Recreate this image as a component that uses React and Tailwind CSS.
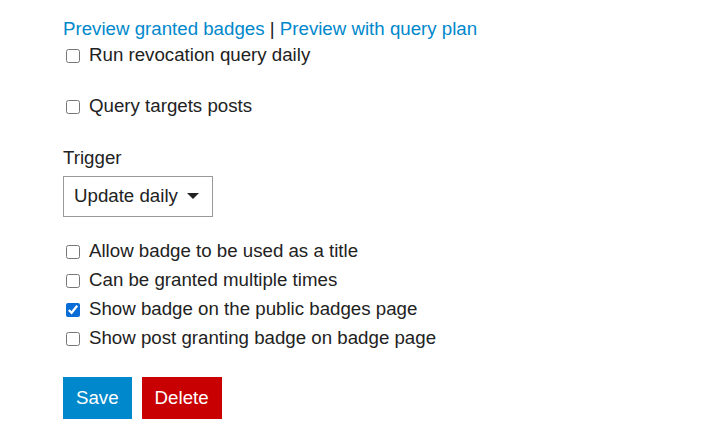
const options = [
    { label: 'Allow badge to be used as a title', checked: false },
    { label: 'Can be granted multiple times', checked: false },
    { label: 'Show badge on the public badges page', checked: true },
    { label: 'Show post granting badge on badge page', checked: false },
];

function Check({ label, checked }) {
    return (
        <label className="flex items-center h-[29px]">
            <input type="checkbox" defaultChecked={checked} className="w-[14px] h-[14px] ml-[3px] mr-[9px] accent-[#0a6cd6]" />
            <span>{label}</span>
        </label>
    );
}

export default function App() {
    return (
        <div className="bg-white min-h-[443px] pl-[63px] pt-[17px] text-[18.7px] text-[#222] font-['Liberation_Sans',Arial,sans-serif]">
            {/* preview links */}
            <div className="leading-[24px]">
                <a className="text-[#0088cc]">Preview granted badges</a>
                <span> | </span>
                <a className="text-[#0088cc]">Preview with query plan</a>
            </div>
            <Check label="Run revocation query daily" />
            <div className="mt-[22px]">
                <Check label="Query targets posts" />
            </div>

            <div className="mt-[24px] leading-[25px]">Trigger</div>
            <div className="mt-[6px] w-[150px] h-[41px] border border-[#999] flex items-center pl-[10px]">
                <span>Update daily</span>
                <svg width="12" height="7" viewBox="0 0 12 7" className="ml-[9px]">
                    <path d="M0 0 L12 0 L6 6 Z" fill="#222" />
                </svg>
            </div>

            <div className="mt-[20px]">
                {options.map((o) => (
                    <Check key={o.label} {...o} />
                ))}
            </div>

            <div className="mt-[24px] flex gap-[10px]">
                <button className="bg-[#0088cc] text-white h-[42px] px-[13px]">Save</button>
                <button className="bg-[#c80001] text-white h-[42px] px-[13px]">Delete</button>
            </div>
        </div>
    );
}
